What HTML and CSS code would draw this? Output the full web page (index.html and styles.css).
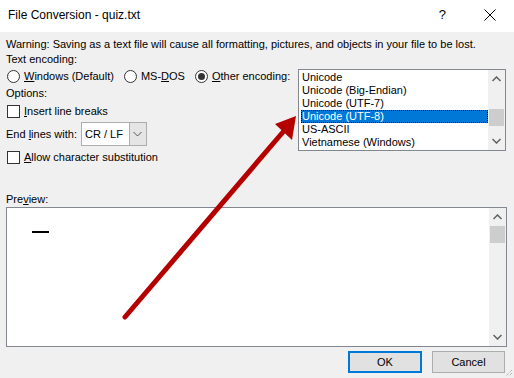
FILE: index.html
```html
<!DOCTYPE html>
<html>
    <head>
        <meta charset="UTF-8">
        <title>File Conversion - quiz.txt</title>
        <link rel="stylesheet" href="styles.css">
    </head>
    <body>
        <div class="dialog">
            <div class="titlebar">
                <span class="title">File Conversion - quiz.txt</span>
                <span class="help">?</span>
                <svg class="close" width="12" height="12" viewBox="0 0 12 12">
                    <path d="M0.5 0.5 L11.5 11.5 M11.5 0.5 L0.5 11.5" stroke="#000" stroke-width="1" fill="none"/>
                </svg>
            </div>
            <div class="content">
                <div class="warning">Warning: Saving as a text file will cause all formatting, pictures, and objects in your file to be lost.</div>
                <div class="top">
                    <div class="options">
                        <div class="line">Text encoding:</div>
                        <div class="radios">
                            <span class="opt"><span class="radio"></span><span><u>W</u>indows (Default)</span></span>
                            <span class="opt"><span class="radio"></span><span>MS-<u>D</u>OS</span></span>
                            <span class="opt"><span class="radio on"></span><span><u>O</u>ther encoding:</span></span>
                        </div>
                        <div class="line gap1">Options:</div>
                        <div class="check-row gap1"><span class="check"></span><span><u>I</u>nsert line breaks</span></div>
                        <div class="end-row">
                            <span>End <u>l</u>ines with:</span>
                            <span class="select">
                                <span class="select-text">CR / LF</span>
                                <span class="select-btn">
                                    <svg width="9" height="6" viewBox="0 0 9 6"><path d="M0.5 1 L4.5 5 L8.5 1" stroke="#555" fill="none"/></svg>
                                </span>
                            </span>
                        </div>
                        <div class="check-row"><span class="check"></span><span><u>A</u>llow character substitution</span></div>
                    </div>
                    <div class="listbox">
                        <div class="items">
                            <div class="item">Unicode</div>
                            <div class="item">Unicode (Big-Endian)</div>
                            <div class="item">Unicode (UTF-7)</div>
                            <div class="item selected">Unicode (UTF-8)</div>
                            <div class="item">US-ASCII</div>
                            <div class="item">Vietnamese (Windows)</div>
                        </div>
                        <div class="scrollbar">
                            <svg class="up" width="9" height="6" viewBox="0 0 9 6"><path d="M0.5 5 L4.5 1 L8.5 5" stroke="#606060" stroke-width="1.5" fill="none"/></svg>
                            <div class="track"><div class="thumb list-thumb"></div></div>
                            <svg class="down" width="9" height="6" viewBox="0 0 9 6"><path d="M0.5 1 L4.5 5 L8.5 1" stroke="#606060" stroke-width="1.5" fill="none"/></svg>
                        </div>
                    </div>
                </div>
                <div class="preview-label">Pre<u>v</u>iew:</div>
                <div class="preview">
                    <div class="preview-body"><div class="dash"></div></div>
                    <div class="scrollbar">
                        <svg class="up" width="9" height="6" viewBox="0 0 9 6"><path d="M0.5 5 L4.5 1 L8.5 5" stroke="#606060" stroke-width="1.5" fill="none"/></svg>
                        <div class="track"><div class="thumb preview-thumb"></div></div>
                        <svg class="down" width="9" height="6" viewBox="0 0 9 6"><path d="M0.5 1 L4.5 5 L8.5 1" stroke="#606060" stroke-width="1.5" fill="none"/></svg>
                    </div>
                </div>
                <div class="buttons">
                    <button class="btn default">OK</button>
                    <button class="btn">Cancel</button>
                </div>
            </div>
            <svg class="grip" width="8" height="8" viewBox="0 0 8 8">
                <path d="M7 1 L1 7 M7 4 L4 7" stroke="#a0a0a0" stroke-width="1" stroke-dasharray="1 1" fill="none"/>
            </svg>
            <!-- red annotation arrow drawn on top of the dialog -->
            <svg class="arrow" width="514" height="378" viewBox="0 0 514 378">
                <line x1="125" y1="317" x2="283" y2="132" stroke="#b50000" stroke-width="5" stroke-linecap="round"/>
                <polygon points="296,116 275,124 292,140" fill="#b50000"/>
            </svg>
        </div>
    </body>
</html>
```
FILE: styles.css
```css
body{
    margin:0;
    font-family: 'Liberation Sans', Arial, sans-serif;
    font-size:11px;
    color:#000;
}

u{
    text-decoration:underline;
    text-underline-offset:1px;
}

.dialog{
    position:relative;
    width:514px;
    height:378px;
    background-color:#f0f0f0;
    overflow:hidden;
}

.titlebar{
    display:flex;
    align-items:center;
    height:32px;
    padding-left:8px;
    background-color:#fff;
    border-bottom:1px solid #f0f0f0;
}

.title{
    flex:1;
    font-size:12px;
    margin-top:-3px;
}

.help{
    margin-right:38px;
    margin-top:-3px;
    font-size:13px;
}

.close{
    margin-right:18px;
    margin-top:-3px;
}

.content{
    padding:4px 6px 0 6px;
}

.warning{
    line-height:15px;
    white-space:nowrap;
}

.top{
    display:flex;
    justify-content:space-between;
}

.line{
    line-height:15px;
}

.gap1{
    margin-top:1px;
}

.radios{
    display:flex;
    height:18px;
    align-items:center;
    white-space:nowrap;
}

.opt{
    display:flex;
    align-items:center;
    margin-right:9px;
}

.opt:last-child{
    margin-right:0;
}

.radio{
    box-sizing:border-box;
    width:13px;
    height:13px;
    border:1px solid #333;
    border-radius:50%;
    background-color:#fff;
    margin:0 4px 0 1px;
    display:flex;
    align-items:center;
    justify-content:center;
}

.radio.on::after{
    content:'';
    width:7px;
    height:7px;
    border-radius:50%;
    background-color:#333;
}

.check-row{
    display:flex;
    align-items:center;
    height:18px;
    white-space:nowrap;
}

.check{
    box-sizing:border-box;
    width:13px;
    height:13px;
    border:1px solid #333;
    background-color:#fff;
    margin:0 4px 0 1px;
}

.end-row{
    display:flex;
    align-items:center;
    margin-top:2px;
    margin-bottom:2px;
}

.select{
    display:flex;
    box-sizing:border-box;
    width:66px;
    height:24px;
    margin-left:4px;
    border:1px solid #adadad;
    background-color:#fff;
}

.select-text{
    flex:1;
    line-height:22px;
    padding-left:3px;
}

.select-btn{
    width:16px;
    background-color:#e5e5e5;
    border-left:1px solid #adadad;
    display:flex;
    align-items:center;
    justify-content:center;
}

.listbox{
    display:flex;
    box-sizing:border-box;
    width:208px;
    height:82px;
    margin-top:17px;
    margin-right:2px;
    border:1px solid #828790;
    background-color:#fff;
}

.items{
    flex:1;
    padding:1px 0 0 2px;
    overflow:hidden;
}

.item{
    height:13px;
    line-height:13px;
    padding-left:1px;
    white-space:nowrap;
}

.item.selected{
    background-color:#0078d7;
    color:#fff;
    outline:1px dotted #000;
    outline-offset:-1px;
}

.scrollbar{
    width:17px;
    background-color:#f0f0f0;
    display:flex;
    flex-direction:column;
    align-items:center;
}

.scrollbar .up{
    margin-top:6px;
}

.scrollbar .down{
    margin-bottom:6px;
}

.track{
    flex:1;
    width:100%;
}

.thumb{
    margin-left:1px;
    width:15px;
    height:17px;
    background-color:#cdcdcd;
}

.list-thumb{
    margin-top:27px;
}

.preview-thumb{
    margin-top:6px;
}

.preview-label{
    margin-top:26px;
    line-height:15px;
}

.preview{
    display:flex;
    box-sizing:border-box;
    height:140px;
    width:501px;
    border:1px solid #828790;
    background-color:#fff;
}

.preview-body{
    flex:1;
    padding:23px 0 0 25px;
}

.dash{
    width:17px;
    height:2px;
    background-color:#000;
}

.buttons{
    display:flex;
    justify-content:flex-end;
    gap:10px;
    margin-top:4px;
    margin-right:3px;
}

.btn{
    box-sizing:border-box;
    width:73px;
    height:22px;
    font-family: 'Liberation Sans', Arial, sans-serif;
    font-size:11px;
    color:#000;
    background-color:#e1e1e1;
    border:1px solid #adadad;
    padding:0;
}

.btn.default{
    border:2px solid #0078d7;
    width:74px;
}

.grip{
    position:absolute;
    right:1px;
    bottom:1px;
}

.arrow{
    position:absolute;
    left:0;
    top:0;
    pointer-events:none;
}
```
